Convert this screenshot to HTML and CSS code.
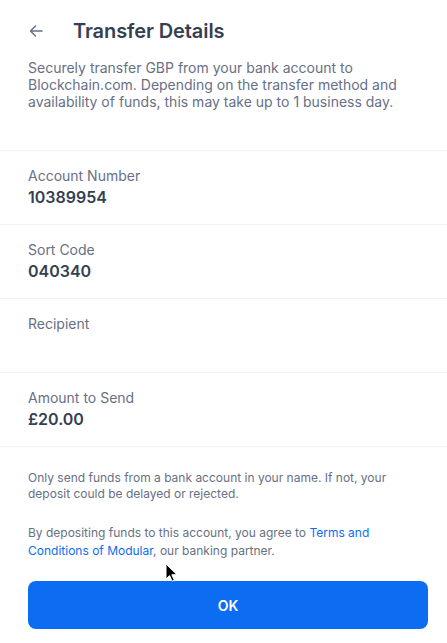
FILE: index.html
```html
<!DOCTYPE html>
<html>
<head>
<meta charset="utf-8">
<link rel="stylesheet" href="styles.css">
</head>
<body>
<div class="page">
  <header class="header">
    <span class="back">
      <svg width="16" height="16" viewBox="0 0 16 16" fill="none"><path d="M14 8H2.5M7.5 3L2.5 8l5 5" stroke="#677085" stroke-width="1.5" stroke-linecap="round" stroke-linejoin="round"/></svg>
    </span>
    <h1 class="title">Transfer Details</h1>
  </header>
  <p class="intro">Securely transfer GBP from your bank account to Blockchain.com. Depending on the transfer method and availability of funds, this may take up to 1 business day.</p>
  <div class="rows">
    <div class="row"><div class="label">Account Number</div><div class="value">10389954</div></div>
    <div class="row"><div class="label">Sort Code</div><div class="value">040340</div></div>
    <div class="row"><div class="label">Recipient</div><div class="value"></div></div>
    <div class="row"><div class="label">Amount to Send</div><div class="value">£20.00</div></div>
  </div>
  <div class="notes">
    <p class="note">Only send funds from a bank account in your name. If not, your deposit could be delayed or rejected.</p>
    <p class="note note2">By depositing funds to this account, you agree to <a class="link" href="#">Terms and Conditions of Modular</a>, our banking partner.</p>
  </div>
  <div class="actions">
    <button class="ok">OK</button>
    <svg class="cursor" width="14" height="20" viewBox="0 0 14 20"><path d="M1 1v15l3.6-3.4 2.5 5.6 2.2-1-2.5-5.5H12z" fill="#000" stroke="#fff" stroke-width="1"/></svg>
  </div>
</div>
</body>
</html>
```
FILE: styles.css
```css
* { box-sizing: border-box; }
html, body { margin: 0; padding: 0; background: #fff; }
body { font-family: Inter, "Noto Sans", sans-serif; color: #353f52; }
.page { width: 447px; height: 643px; display: flex; flex-direction: column; }
.header { display: flex; align-items: center; height: 30px; margin-top: 16px; padding: 0 28px; }
.back { width: 20px; display: flex; align-items: center; }
.title { margin: 0 0 0 25px; font-size: 20px; font-weight: 600; color: #353f52; line-height: 30px; letter-spacing: -0.1px; }
.intro { margin: 13px 28px 0; font-size: 14px; line-height: 17px; color: #677085; }
.rows { margin-top: 40px; border-top: 1px solid #f0f2f7; }
.row { padding: 15px 28px 16px; border-bottom: 1px solid #f0f2f7; height: 74px; }
.label { font-size: 14px; line-height: 20px; color: #677085; }
.value { font-size: 16px; line-height: 22px; font-weight: 600; color: #353f52; min-height: 22px; }
.notes { padding: 23px 28px 0; }
.note { margin: 0; font-size: 12px; line-height: 16px; color: #677085; }
.note2 { margin-top: 22px; line-height: 18px; }
.link { color: #0c6cf2; text-decoration: none; }
.actions { position: relative; padding: 21px 19px 0 28px; }
.ok { width: 100%; height: 48px; border: none; border-radius: 8px; background: #0c6cf2; color: #fff; font-family: Inter, sans-serif; font-size: 14px; font-weight: 600; }
.cursor { position: absolute; left: 165px; top: 3px; }
```
